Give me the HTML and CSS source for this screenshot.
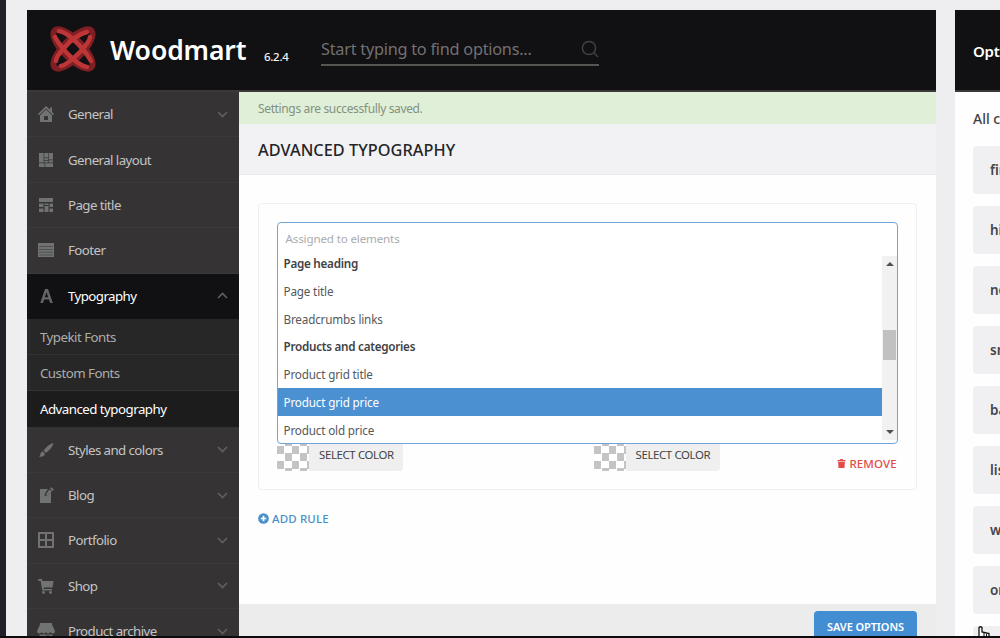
FILE: index.html
```html
<!DOCTYPE html>
<html lang="en">
<head>
<meta charset="utf-8">
<title>Woodmart theme settings</title>
<link rel="stylesheet" href="styles.css">
</head>
<body>
<div class="screen">
<div class="edge"></div>
<div class="workspace">
  <main class="panel">
    <header class="topbar">
      <svg class="logo" viewBox="0 0 48 48" fill="none">
        <g stroke="#7d1f23" stroke-width="6">
          <ellipse cx="24" cy="24" rx="26" ry="9.500" transform="rotate(45 24 24)"/>
          <ellipse cx="24" cy="24" rx="26" ry="9.500" transform="rotate(-45 24 24)"/>
        </g>
        <g stroke="#be3538" stroke-width="4.500" stroke-linecap="round">
          <path d="M6 12Q12 23 24 34Q32 41 38 42M42 36Q36 25 24 14Q16 7 10 6"/>
          <path d="M7 36Q7 32 15 23Q26 10 38 7M12 41Q18 40 31 27Q41 16 41 12"/>
        </g>
      </svg>
      <span class="brand">Woodmart</span>
      <span class="version">6.2.4</span>
      <div class="search">
        <span class="search-text">Start typing to find options...</span>
        <svg class="search-icon" viewBox="0 0 18 18" fill="none" stroke="#3f4244" stroke-width="1.500"><circle cx="8" cy="8" r="6.600"/><path d="M12.800 12.800L17 17"/></svg>
      </div>
    </header>
    <div class="body">
      <nav class="menu">
        <a class="item"><svg class="icon" viewBox="0 0 16 16"><path d="M8 0L0 8l1 1.200L8 2.500l7 6.700L16 8l-2-2V1.500h-2v2.300z"/><path d="M2 9.200L8 3.600l6 5.600V16H2zM6 10v4h4v-4z" fill-rule="evenodd"/></svg><span>General</span><svg class="chev" viewBox="0 0 11 7"><path d="M1 1l4.500 4.500L10 1"/></svg></a>
        <a class="item"><svg class="icon" viewBox="0 0 16 16"><path d="M1 1h4.600v9.500H1zM6.200 1h4v4.500h-4zM10.800 1H15v6.500h-4.200zM6.200 6.200h4v1.800h-4zM10.800 8.200H15v2.300h-4.200zM6.200 8.700h4v1.800h-4zM1 11.200h5.500V15H1zM7.200 11.200H15V15H7.200z"/></svg><span>General layout</span></a>
        <a class="item"><svg class="icon" viewBox="0 0 16 16"><path d="M1 1h14v4H1zM1 6.500h4.500V10H1zM6.500 6.500h4V8h-4zM11.500 6.500H15V10h-3.500zM1 11.500h4.500V15H1zM6.500 9h4v6h-4zM11.500 11.500H15V15h-3.500z"/></svg><span>Page title</span></a>
        <a class="item"><svg class="icon" viewBox="0 0 16 16"><path d="M0 1h16v14H0z"/><path d="M1 4.500h14M1 7.500h14M1 10.200h14M1 13h14" stroke="#484748" stroke-width=".8"/></svg><span>Footer</span></a>
        <a class="item open"><svg class="icon" viewBox="0 0 16 16"><path d="M2.300 15L7 1h3l4.800 14h-2.700L11 11.500H6.100L5 15zM6.900 9.300h3.300L8.500 4.200z"/></svg><span>Typography</span><svg class="chev" viewBox="0 0 11 7"><path d="M1 6l4.500-4.500L10 6"/></svg></a>
        <a class="sub">Typekit Fonts</a>
        <a class="sub">Custom Fonts</a>
        <a class="sub current">Advanced typography</a>
        <a class="item"><svg class="icon" viewBox="0 0 16 16"><path d="M15.500 1Q11 1.500 5.500 8.500L8 11Q15 5 15.500 1zM4.800 9.500L7 11.700Q6 15.500 1 14.500Q2.500 13.500 2.600 11.500Q3 9.500 4.800 9.500z"/></svg><span>Styles and colors</span><svg class="chev" viewBox="0 0 11 7"><path d="M1 1l4.500 4.500L10 1"/></svg></a>
        <a class="item"><svg class="icon" viewBox="0 0 16 16"><path d="M2 2h8L7 6.500 6.500 9l2.500-.6L13 5v11H2z"/><path d="M13 0l3 2.500-1.200 1.500-2.600-2.300zM11.600 2.300l2.500 2.200-4.600 3.600-1.500.4.300-1.700z"/></svg><span>Blog</span><svg class="chev" viewBox="0 0 11 7"><path d="M1 1l4.500 4.500L10 1"/></svg></a>
        <a class="item"><svg class="icon" viewBox="0 0 16 16"><path fill-rule="evenodd" d="M1 0h14q1 0 1 1v14q0 1-1 1H1q-1 0-1-1V1q0-1 1-1zM2 2v5h5V2zM9 2v5h5V2zM2 9v5h5V9zM9 9v5h5V9z"/></svg><span>Portfolio</span><svg class="chev" viewBox="0 0 11 7"><path d="M1 1l4.500 4.500L10 1"/></svg></a>
        <a class="item"><svg class="icon" viewBox="0 0 16 16"><path d="M0 1h3.800l.7 2H15.500L14.500 9.500H5.500L5.800 11H14v1.500H4.300L2.600 2.800H0z"/><circle cx="5.500" cy="14.500" r="1.400"/><circle cx="12.500" cy="14.500" r="1.400"/></svg><span>Shop</span><svg class="chev" viewBox="0 0 11 7"><path d="M1 1l4.500 4.500L10 1"/></svg></a>
        <a class="item"><svg class="icon wide" viewBox="0 0 18 16"><path d="M3 0h12v1.500H3zM3 1.500h12l3 6.500q0 2.500-2 2.500T13.500 9Q12.500 10.500 11.200 10.500T9 9Q8 10.500 6.800 10.500T4.500 9Q4 10.500 2 10.500T0 8z"/><path d="M2.500 11.500h13V16h-3v-3.500H9V16H2.500z"/></svg><span>Product archive</span><svg class="chev" viewBox="0 0 11 7"><path d="M1 1l4.500 4.500L10 1"/></svg></a>
      </nav>
      <section class="content">
        <div class="notice"><span>Settings are successfully saved.</span></div>
        <h1 class="heading"><span>ADVANCED TYPOGRAPHY</span></h1>
        <div class="options">
          <div class="rule">
            <div class="select">
              <div class="select-input"><span>Assigned to elements</span></div>
              <div class="select-body">
                <ul class="list">
                  <li class="group"><span>Page heading</span></li>
                  <li><span>Page title</span></li>
                  <li><span>Breadcrumbs links</span></li>
                  <li class="group"><span>Products and categories</span></li>
                  <li><span>Product grid title</span></li>
                  <li class="hover"><span>Product grid price</span></li>
                  <li><span>Product old price</span></li>
                </ul>
                <div class="scrollbar"><svg class="arrow" viewBox="0 0 8 4"><path d="M0 4l4-4 4 4z"/></svg><div class="thumb"></div><svg class="arrow" viewBox="0 0 8 4"><path d="M0 0l4 4 4-4z"/></svg></div>
              </div>
            </div>
            <div class="colors">
              <div class="color"><i class="swatch"></i><span>SELECT COLOR</span></div>
              <div class="color"><i class="swatch"></i><span>SELECT COLOR</span></div>
              <a class="remove"><svg viewBox="0 0 9 10"><path d="M0 1h3V0h3v1h3v1.400H0z"/><path d="M.7 3h7.600l-.5 7H1.200z"/></svg><span>REMOVE</span></a>
            </div>
          </div>
          <a class="add"><svg viewBox="0 0 12 12"><circle cx="6" cy="6" r="5.800"/><path d="M6 3v6M3 6h6" stroke="#fff" stroke-width="1.900"/></svg><span>ADD RULE</span></a>
        </div>
        <footer class="actions"><a class="save"><span>SAVE OPTIONS</span></a></footer>
      </section>
    </div>
  </main>
  <aside class="panel presets">
    <header class="side-title">Options</header>
    <div class="side-body">
      <div class="all">All custom</div>
      <div class="tag">first</div>
      <div class="tag">hide</div>
      <div class="tag">new</div>
      <div class="tag">small</div>
      <div class="tag">base</div>
      <div class="tag">list</div>
      <div class="tag">wide</div>
      <div class="tag">one</div>
      <div class="tag"></div>
    </div>
  </aside>
</div>
<svg class="cursor" viewBox="0 0 12 16"><path d="M2 16L1 10V1.500Q2.500 0 4 1.500V6l7 1.500V16z" fill="#fff" stroke="#111" stroke-width="1.300"/><path d="M6 7v4M8.500 8v3" stroke="#111"/></svg>
</div>
</body>
</html>
```
FILE: styles.css
```css
* { box-sizing: border-box; }
body { margin: 0; font-family: "Noto Sans", "Open Sans", sans-serif; color: #3c434a; background: #eeedf0; }
span { white-space: nowrap; }
.screen { position: relative; width: 1000px; height: 638px; display: flex; overflow: hidden; border-bottom: 2px solid #0b0b0d; background: #eeedf0; }
.edge { width: 6px; background: #20202a; flex: none; }
.workspace { display: flex; gap: 19px; padding: 10px 0 0 21px; flex: none; height: 636px; }
.panel { width: 909px; height: 626px; background: #fefefe; overflow: hidden; display: flex; flex-direction: column; flex: none; }
.topbar { height: 82px; flex: none; background: #111012; border-bottom: 2px solid #3b3839; display: flex; align-items: center; padding-left: 22px; }
.logo { width: 48px; height: 48px; margin-top: -3px; }
.brand { margin-left: 13px; width: 142px; font-size: 26.5px; font-weight: 600; color: #fff; letter-spacing: -.1px; }
.version { width: 26px; margin: 12px 31px 0 12px; font-size: 11.5px; font-weight: 500; color: #f3f3f3; letter-spacing: -.3px; }
.search { width: 278px; height: 33px; margin-top: -1px; border-bottom: 2px solid #555552; display: flex; align-items: center; justify-content: space-between; }
.search-text { font-size: 16.3px; color: #727173; letter-spacing: -.25px; }
.search-icon { width: 18px; height: 18px; }
.body { display: flex; flex: 1; min-height: 0; }
.menu { width: 212px; background: #353334; flex: none; display: flex; flex-direction: column; }
.item { height: 45.4px; flex: none; border-bottom: 1px solid #3b3a3a; display: flex; align-items: center; padding: 0 11px; font-size: 13.3px; color: #c4c4c4; letter-spacing: -.58px; }
.icon { width: 16px; height: 16px; margin-right: 14px; fill: #717272; flex: none; }
.icon.wide { width: 18px; margin: 0 13px 0 -1px; }
.chev { width: 11px; height: 7px; margin-left: auto; fill: none; stroke: #606060; stroke-width: 1.6; }
.item.open { background: #111012; color: #fff; border-color: #111012; }
.open .icon { fill: #656565; }
.sub { height: 36.2px; flex: none; background: #272727; border-bottom: 1px solid #323232; padding-left: 13px; line-height: 36px; font-size: 13.3px; letter-spacing: -.53px; color: #adadad; }
.sub.current { background: #1c1c1c; color: #fff; }
.content { flex: 1; display: flex; flex-direction: column; min-width: 0; }
.notice { height: 32px; background: #dfefd8; padding-left: 19px; line-height: 33px; font-size: 12px; color: #85917f; letter-spacing: -.36px; flex: none; }
.heading { margin: 0; height: 51px; background: #f2f2f4; border-bottom: 1px solid #e9e9eb; padding-left: 19px; line-height: 52px; font-size: 16.3px; font-weight: 500; color: #242528; letter-spacing: .05px; flex: none; }
.options { flex: 1; padding: 28px 19px 0; }
.rule { height: 287px; border: 1px solid #efeff1; border-radius: 4px; padding: 18px; }
.select { height: 222px; border: 1px solid #6ea5d5; border-radius: 4px; background: #fff; overflow: hidden; display: flex; flex-direction: column; }
.select-input { height: 26px; flex: none; padding-left: 7.5px; line-height: 31px; font-size: 11.6px; letter-spacing: -.15px; color: #ababad; }
.select-body { display: flex; flex: 1; min-height: 0; }
.list { flex: 1; margin: 0; padding: 0; list-style: none; font-size: 11.7px; letter-spacing: -.17px; color: #55585c; }
.list li { height: 27.8px; line-height: 28px; padding-left: 5.5px; }
.list .group { font-weight: 600; color: #3f4246; letter-spacing: -.27px; }
.list .hover { background: #4b90d0; color: #fff; }
.scrollbar { width: 15px; height: 184px; margin-top: 7px; background: #f1f1f2; display: flex; flex-direction: column; align-items: center; padding: 6px 0 6px; }
.arrow { width: 8px; height: 4px; fill: #505050; flex: none; }
.arrow:last-child { margin-top: auto; }
.thumb { width: 13px; height: 30px; margin-top: 64px; background: #c1c1c1; }
.colors { display: flex; height: 30px; }
.color { width: 126px; height: 27px; display: flex; background: #efeff0; border-radius: 0 0 4px 4px; font-size: 11.4px; color: #414244; line-height: 22px; margin-right: 190.5px; flex: none; letter-spacing: -.35px; }
.color + .color { margin-right: 117px; }
.swatch { width: 32px; height: 27px; margin-right: 10px; border-radius: 0 0 0 4px; background: conic-gradient(#fff 25%, #c4c4c5 0 50%, #fff 0 75%, #c4c4c5 0) 0 2px / 15px 15px; }
.remove { display: flex; align-items: center; height: 39px; color: #e34a48; font-size: 11.5px; font-weight: 500; letter-spacing: .1px; }
.remove svg { width: 9px; height: 9px; fill: #e34a48; margin-right: 4px; }
.add { display: flex; align-items: center; height: 56px; color: #4a8fc9; font-size: 11.5px; font-weight: 500; letter-spacing: .15px; }
.add svg { width: 11px; height: 11px; margin-right: 3px; fill: #4a8fc9; }
.actions { height: 32px; background: #ececed; display: flex; justify-content: flex-end; padding: 7px 19px 0; flex: none; }
.save { width: 103px; height: 30px; border-radius: 4px 4px 0 0; background: #438dd2; color: #fff; text-align: center; font-size: 11px; font-weight: 600; line-height: 32px; letter-spacing: -.1px; }
.presets { width: 120px; }
.side-title { height: 82px; flex: none; background: #111012; border-bottom: 2px solid #3b3839; color: #fff; padding-left: 18px; line-height: 82px; font-weight: 600; font-size: 15px; letter-spacing: -.2px; }
.side-body { padding: 13px 0 0 18px; display: flex; flex-direction: column; }
.all { height: 41px; line-height: 28px; font-size: 14px; color: #3e3e41; font-weight: 500; }
.tag { height: 48px; margin-bottom: 12px; border-radius: 4px; background: #f0f0f2; padding-left: 17px; line-height: 48px; font-size: 13.5px; font-weight: 600; color: #464649; flex: none; }
.cursor { position: absolute; left: 978px; top: 626px; width: 12px; height: 16px; }
```
